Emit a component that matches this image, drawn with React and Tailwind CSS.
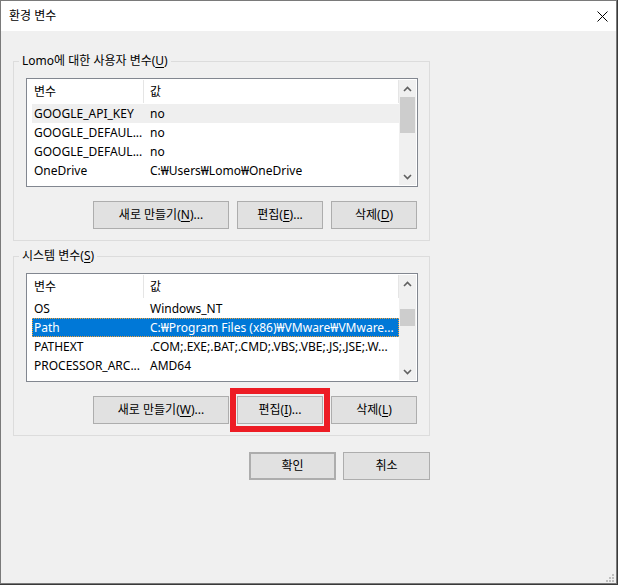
import React from 'react';

const font = "font-['Noto_Sans','Noto_Sans_CJK_KR',sans-serif]";

const Key = ({ children }) => <span className="underline underline-offset-[2px]">{children}</span>;

const Btn = ({ children, className = '' }) => (
  <button className={`h-[28px] bg-[#e1e1e1] border border-[#adadad] text-[12px] leading-none text-black flex items-center justify-center ${className}`}>
    {children}
  </button>
);

const Chevron = ({ up }) => (
  <svg width="9" height="6" viewBox="0 0 9 6">
    <polyline
      points={up ? '1,5 4.5,1.5 8,5' : '1,1 4.5,4.5 8,1'}
      fill="none"
      stroke="#606060"
      strokeWidth="1.6"
    />
  </svg>
);

const ListView = ({ rows, selected, focused, thumbTop, thumbHeight }) => (
  <div className="h-[109px] border border-[#828790] bg-white flex">
    <div className="flex-1 pl-[5px] overflow-hidden">
      {/* Header */}
      <div className="h-[25px] flex text-[12px]">
        <div className="w-[112px] pl-[2px] my-[1px] flex items-center border-r border-[#e5e5e5]">변수</div>
        <div className="flex-1 pl-[6px] my-[1px] flex items-center border-r border-[#e5e5e5]">값</div>
      </div>
      {rows.map((row, i) => (
        <div
          key={i}
          className={`h-[19px] flex items-center text-[12px] whitespace-nowrap ${
            i === selected
              ? focused
                ? 'bg-[#0078d7] text-white outline outline-1 outline-dotted outline-[#f2a33a] -outline-offset-1'
                : 'bg-[#efefef] text-black'
              : 'text-black'
          }`}
        >
          <div className="w-[112px] pl-[2px] overflow-hidden">{row[0]}</div>
          <div className="flex-1 pl-[6px] overflow-hidden">{row[1]}</div>
        </div>
      ))}
    </div>
    {/* Scrollbar */}
    <div className="w-[17px] mt-[1px] mb-[1px] mr-[1px] bg-[#f0f0f0] flex flex-col">
      <div className="h-[17px] flex items-center justify-center">
        <Chevron up />
      </div>
      <div className="mx-[1px] bg-[#cdcdcd]" style={{ marginTop: thumbTop, height: thumbHeight }}></div>
      <div className="flex-1"></div>
      <div className="h-[17px] flex items-center justify-center">
        <Chevron />
      </div>
    </div>
  </div>
);

const userVars = [
  ['GOOGLE_API_KEY', 'no'],
  ['GOOGLE_DEFAUL...', 'no'],
  ['GOOGLE_DEFAUL...', 'no'],
  ['OneDrive', 'C:₩Users₩Lomo₩OneDrive'],
];

const systemVars = [
  ['OS', 'Windows_NT'],
  ['Path', 'C:₩Program Files (x86)₩VMware₩VMware...'],
  ['PATHEXT', '.COM;.EXE;.BAT;.CMD;.VBS;.VBE;.JS;.JSE;.W...'],
  ['PROCESSOR_ARC...', 'AMD64'],
];

export default function App() {
  return (
    <div className={`w-[618px] h-[585px] bg-[#3a3a3a] ${font}`}>
      <div className="relative w-[617px] h-[584px] border border-[#7a7a7a] bg-[#f0f0f0] text-black">
        {/* Title bar */}
        <div className="h-[30px] bg-white flex items-center justify-between pl-[8px] pr-[8px]">
          <span className="text-[12px]">환경 변수</span>
          <svg width="11" height="11" viewBox="0 0 11 11">
            <path d="M0.5 0.5 L10.5 10.5 M10.5 0.5 L0.5 10.5" stroke="#000" strokeWidth="1" />
          </svg>
        </div>

        <div className="pl-[12px]">
          {/* User variables */}
          <div className="relative mt-[30px] w-[417px] border border-[#dcdcdc] pt-[16px] pl-[12px] pr-[11px] pb-[11px]">
            <span className="absolute top-[-9px] left-[5px] px-[3px] bg-[#f0f0f0] text-[12px] leading-[16px]">
              Lomo에 대한 사용자 변수(<Key>U</Key>)
            </span>
            <ListView rows={userVars} selected={0} focused={false} thumbTop={0} thumbHeight={36} />
            <div className="mt-[14px] flex justify-end gap-[8px] pr-[1px]">
              <Btn className="w-[136px]">새로 만들기(<Key>N</Key>)...</Btn>
              <Btn className="w-[86px]">편집(<Key>E</Key>)...</Btn>
              <Btn className="w-[86px]">삭제(<Key>D</Key>)</Btn>
            </div>
          </div>

          {/* System variables */}
          <div className="relative mt-[15px] w-[417px] border border-[#dcdcdc] pt-[16px] pl-[12px] pr-[11px] pb-[11px]">
            <span className="absolute top-[-9px] left-[5px] px-[3px] bg-[#f0f0f0] text-[12px] leading-[16px]">
              시스템 변수(<Key>S</Key>)
            </span>
            <ListView rows={systemVars} selected={1} focused={true} thumbTop={17} thumbHeight={17} />
            <div className="mt-[14px] flex justify-end gap-[8px] pr-[1px]">
              <Btn className="w-[136px]">새로 만들기(<Key>W</Key>)...</Btn>
              <div className="relative">
                <Btn className="w-[86px]">편집(<Key>I</Key>)...</Btn>
                <div className="absolute left-[-7px] top-[-8px] w-[100px] h-[44px] border-[6px] border-[#ed1c24] pointer-events-none"></div>
              </div>
              <Btn className="w-[86px]">삭제(<Key>L</Key>)</Btn>
            </div>
          </div>

          {/* Dialog buttons */}
          <div className="mt-[16px] w-[417px] flex justify-end gap-[7px]">
            <Btn className="w-[87px] border-2 border-[#0078d7]">확인</Btn>
            <Btn className="w-[87px]">취소</Btn>
          </div>
        </div>

        {/* Resize grip */}
        <svg width="9" height="8" viewBox="0 0 9 8" className="absolute right-[1px] bottom-[1px]">
          <rect x="6" y="0" width="2" height="2" fill="#bfbfbf" />
          <rect x="3" y="3" width="2" height="2" fill="#bfbfbf" />
          <rect x="6" y="3" width="2" height="2" fill="#bfbfbf" />
          <rect x="0" y="6" width="2" height="2" fill="#bfbfbf" />
          <rect x="3" y="6" width="2" height="2" fill="#bfbfbf" />
          <rect x="6" y="6" width="2" height="2" fill="#bfbfbf" />
        </svg>
      </div>
    </div>
  );
}
